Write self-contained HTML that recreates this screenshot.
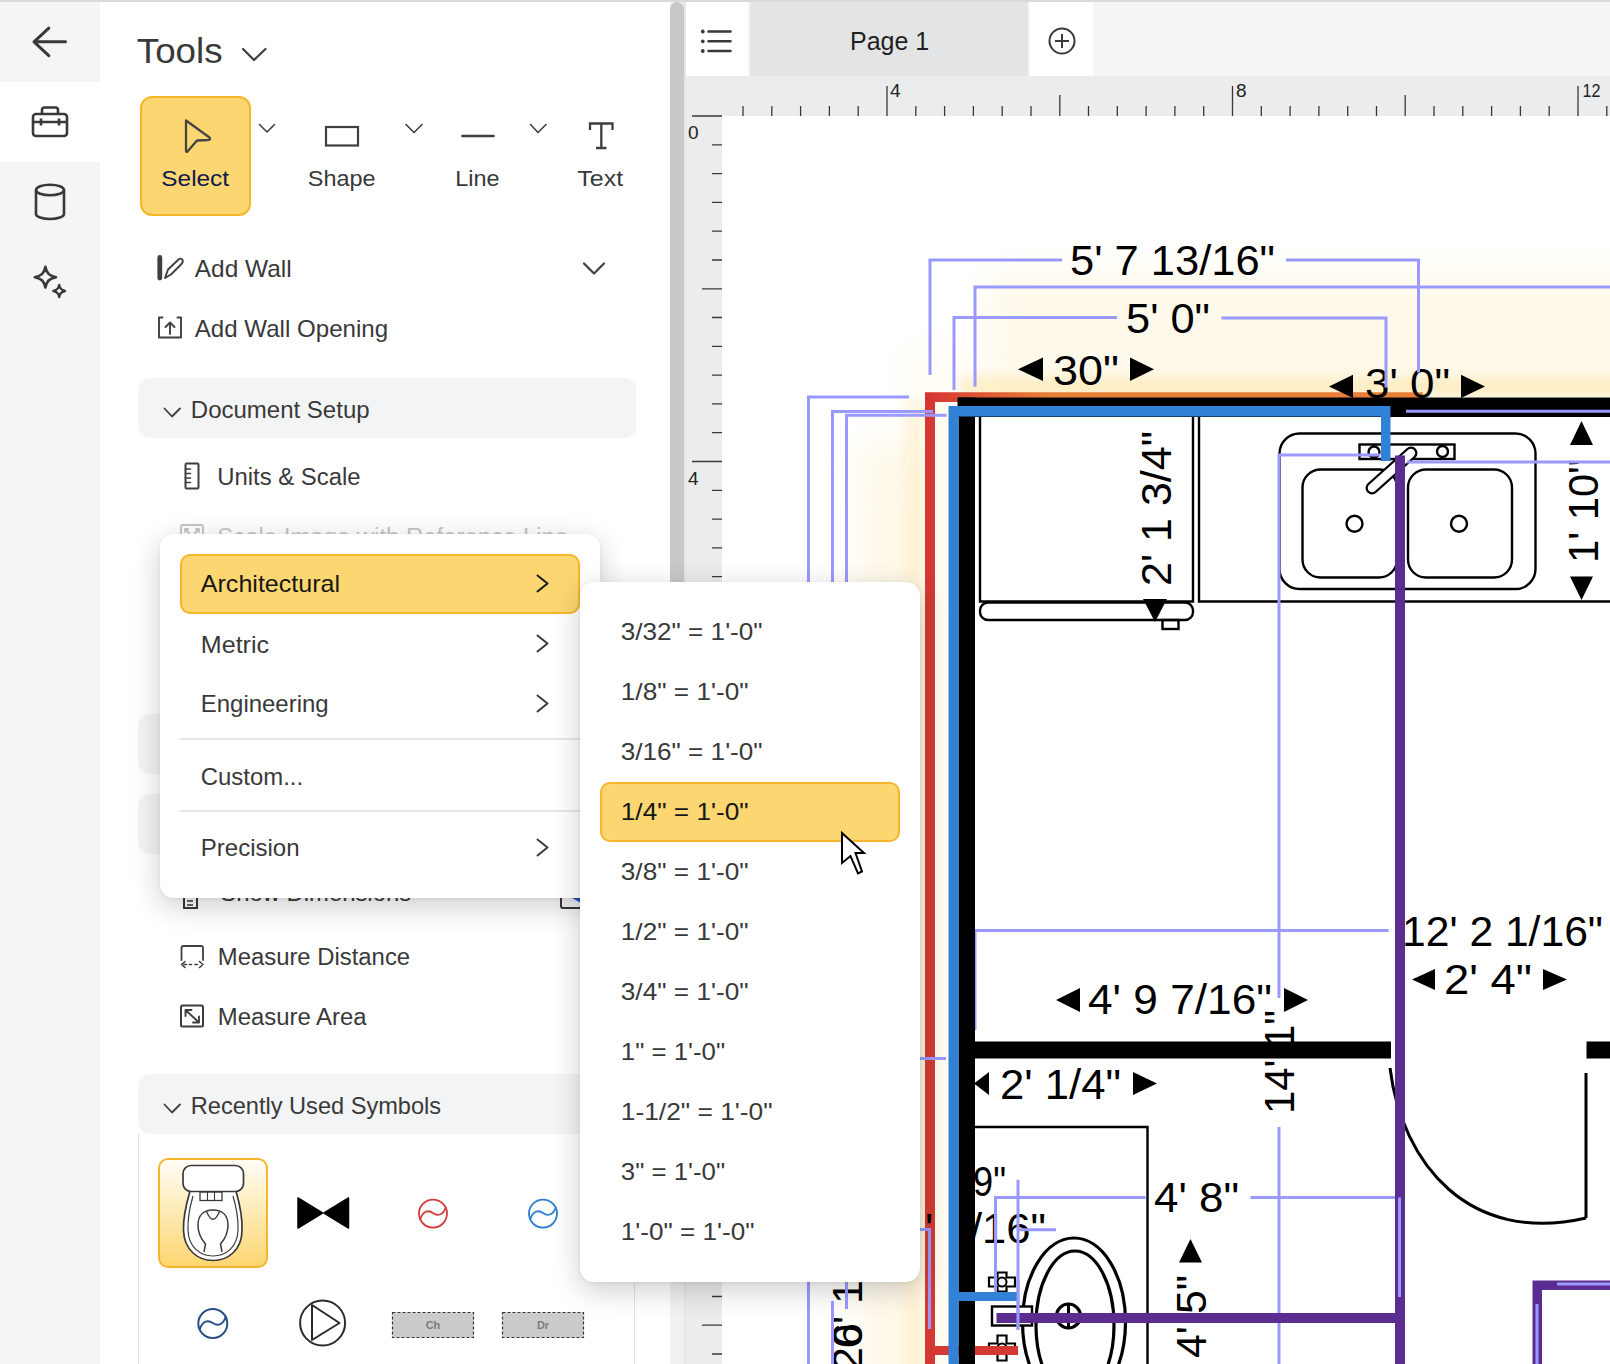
<!DOCTYPE html>
<html><head><meta charset="utf-8">
<style>
html,body{margin:0;padding:0}
body{width:1610px;height:1364px;overflow:hidden;position:relative;background:#fff;font-family:"Liberation Sans",sans-serif;color:#393939}
.a{position:absolute}
.t{position:absolute;white-space:nowrap;line-height:1}
</style></head><body>
<!-- ===== CANVAS ===== -->
<div class="a" style="left:686px;top:2px;width:924px;height:74px;background:#f4f5f7"></div>
<div class="a" style="left:686px;top:2px;width:62px;height:74px;background:#fff"></div>
<div class="a" style="left:750px;top:2px;width:278px;height:74px;background:#e3e4e6"></div>
<div class="a" style="left:1030px;top:2px;width:63px;height:74px;background:#fff"></div>
<div class="t" style="left:850px;top:29px;font-size:25px;color:#1f1f1f">Page 1</div>
<svg class="a" style="left:0;top:0" width="1610" height="1364" viewBox="0 0 1610 1364">
  <!-- list icon -->
  <g stroke="#393939" stroke-width="2.6" stroke-linecap="round" fill="none">
    <path d="M702.8 31.5h0M702.8 41.3h0M702.8 51h0" stroke-width="3.8"/>
    <path d="M708.5 31.5h22M708.5 41.3h22M708.5 51h22"/>
  </g>
  <!-- plus circle -->
  <g stroke="#393939" stroke-width="2" fill="none">
    <circle cx="1062" cy="41" r="12.5"/>
    <path d="M1062 34v14M1055 41h14"/>
  </g>
</svg>
<!-- rulers -->
<div class="a" style="left:686px;top:76px;width:924px;height:40px;background:#ebecee"></div>
<div class="a" style="left:686px;top:116px;width:36px;height:1248px;background:#ebecee"></div>
<svg class="a" style="left:0;top:0" width="1610" height="1364">
  <path stroke="#393939" stroke-width="1.3" fill="none" d="M743.0 106V116 M771.8 106V116 M800.6 106V116 M829.4 106V116 M858.2 106V116 M887.0 86V116 M915.8 106V116 M944.6 106V116 M973.4 106V116 M1002.2 106V116 M1031.0 106V116 M1059.8 95V116 M1088.5 106V116 M1117.3 106V116 M1146.1 106V116 M1174.9 106V116 M1203.7 106V116 M1232.5 86V116 M1261.3 106V116 M1290.1 106V116 M1318.9 106V116 M1347.7 106V116 M1376.5 106V116 M1405.2 95V116 M1434.0 106V116 M1462.8 106V116 M1491.6 106V116 M1520.4 106V116 M1549.2 106V116 M1578.0 86V116 M1606.8 106V116"/>
  <path stroke="#393939" stroke-width="1.3" fill="none" d="M692 116H722 M712 144.8H722 M712 173.6H722 M712 202.4H722 M712 231.2H722 M712 260.0H722 M702 288.8H722 M712 317.5H722 M712 346.3H722 M712 375.1H722 M712 403.9H722 M712 432.7H722 M692 461.5H722 M712 490.3H722 M712 519.1H722 M712 547.9H722 M712 576.7H722 M712 605.5H722 M702 634.2H722 M712 663.0H722 M712 691.8H722 M712 720.6H722 M712 749.4H722 M712 778.2H722 M692 807.0H722 M712 835.8H722 M712 864.6H722 M712 893.4H722 M712 922.2H722 M712 951.0H722 M702 979.8H722 M712 1008.5H722 M712 1037.3H722 M712 1066.1H722 M712 1094.9H722 M712 1123.7H722 M692 1152.5H722 M712 1181.3H722 M712 1210.1H722 M712 1238.9H722 M712 1267.7H722 M712 1296.5H722 M702 1325.2H722 M712 1354.0H722"/>
  <g font-family="Liberation Sans" font-size="19" fill="#222">
    <text x="890" y="97">4</text><text x="1236" y="97">8</text><text x="1582.5" y="97" textLength="18" lengthAdjust="spacingAndGlyphs">12</text>
    <text x="688" y="139">0</text><text x="688" y="484.5">4</text>
  </g>
</svg>
<!-- FLOORPLAN -->
<div id="plan" class="a" style="left:722px;top:116px;width:888px;height:1248px;overflow:hidden">
<svg class="a" style="left:-722px;top:-116px" width="1610" height="1364">
<defs>
 <filter id="glow" x="-20%" y="-20%" width="140%" height="140%"><feGaussianBlur stdDeviation="22"/></filter>
</defs>
<!-- glow -->
<defs>
 <filter id="b18" filterUnits="userSpaceOnUse" x="600" y="100" width="1200" height="1400"><feGaussianBlur stdDeviation="18"/></filter>
 <filter id="b7" filterUnits="userSpaceOnUse" x="600" y="100" width="1200" height="1400"><feGaussianBlur stdDeviation="7"/></filter>
 <clipPath id="outside"><path d="M600 100H1700V397H958V1400H600Z"/></clipPath>
</defs>
<g clip-path="url(#outside)">
 <rect x="985" y="270" width="700" height="127" fill="#fdf0c6" opacity="0.36" filter="url(#b18)"/>
 <rect x="960" y="378" width="700" height="18" fill="#fce3a2" opacity="0.65" filter="url(#b7)"/>
 <rect x="855" y="440" width="70" height="1000" fill="#fdf0c6" opacity="0.38" filter="url(#b18)"/>
 <rect x="905" y="400" width="20" height="1000" fill="#fce3a2" opacity="0.35" filter="url(#b7)"/>
 <rect x="900" y="345" width="60" height="55" fill="#fdf0c6" opacity="0.22" filter="url(#b18)"/>
</g>
<rect x="935" y="402" width="13.5" height="962" fill="#fffbee"/>

<!-- thin black fixtures -->
<g fill="none" stroke="#000" stroke-width="2.4">
 <path d="M980 417V601.5H1193V417"/>
 <rect x="980" y="602.5" width="213" height="17.5" rx="8"/>
 <rect x="1162.5" y="620" width="16" height="9"/>
 <path d="M1199 417V601.5H1610"/>
 <rect x="1279.5" y="433.5" width="256" height="155.5" rx="20"/>
 <rect x="1302.5" y="469.5" width="94.5" height="108" rx="18"/>
 <rect x="1408" y="469.5" width="104" height="108" rx="18"/>
 <circle cx="1354.5" cy="523.7" r="8"/>
 <circle cx="1459" cy="523.7" r="8"/>
 <rect x="1359.5" y="444.5" width="95" height="14.5"/>
 <circle cx="1374" cy="452" r="5.5"/>
 <circle cx="1442.5" cy="451.5" r="5.5"/>
 <path d="M1372 488L1411 453" stroke-width="13" stroke-linecap="round"/><path d="M1372 488L1411 453" stroke="#fff" stroke-width="8.4" stroke-linecap="round"/>
 <path d="M975 1127H1147.5V1364"/>
 <path d="M1586 1073V1218" stroke-width="3"/>
 <path d="M1390 1068C1402 1165 1470 1245 1586 1218" stroke-width="3"/>
 <ellipse cx="1074" cy="1322" rx="51.5" ry="84" stroke-width="3.2"/>
 <ellipse cx="1075" cy="1325" rx="39" ry="74" stroke-width="3.2"/>
 <circle cx="1068.5" cy="1316" r="12" stroke-width="3.2"/>
 <path d="M1068.5 1304V1328" stroke-width="3"/>
 <rect x="992" y="1306.5" width="40" height="19" fill="#fff"/>
 <path d="M989 1277.5h8.5v-5h9v5h8.5v9h-8.5v5h-9v-5h-8.5Z" stroke-width="2.2"/><circle cx="1002" cy="1282" r="4.5" fill="#fff" stroke-width="2"/>
 <path d="M989 1343.5h8.5v-8h9v8h8.5v9h-8.5v8h-9v-8h-8.5Z" stroke-width="2.2"/><circle cx="1002" cy="1348" r="4.5" fill="#fff" stroke-width="2"/>
</g>
<!-- red / orange -->
<defs>
 <linearGradient id="rg" x1="925" y1="0" x2="1050" y2="0" gradientUnits="userSpaceOnUse">
  <stop offset="0" stop-color="#d63333"/><stop offset="1" stop-color="#e8803a"/>
 </linearGradient>
</defs>
<path d="M925 392.3H1423V402H935V1364H925Z" fill="url(#rg)"/>
<rect x="925" y="402" width="10" height="962" fill="#d43a33"/>
<rect x="935" y="1346" width="83" height="9" fill="#d43a33"/>
<!-- dimension texts -->
<g font-family="Liberation Sans" font-size="43" fill="#000">
 <text x="1070" y="274.7" textLength="205" lengthAdjust="spacingAndGlyphs">5' 7 13/16"</text>
 <text x="1126" y="332.5" textLength="84" lengthAdjust="spacingAndGlyphs">5' 0"</text>
 <text x="1053" y="384.6" textLength="66" lengthAdjust="spacingAndGlyphs">30"</text>
 <text x="1365" y="398" textLength="85" lengthAdjust="spacingAndGlyphs">3' 0"</text>
 <text x="1402" y="945.7" textLength="201" lengthAdjust="spacingAndGlyphs">12' 2 1/16"</text>
 <text x="1444" y="993.6" textLength="88" lengthAdjust="spacingAndGlyphs">2' 4"</text>
 <text x="1088" y="1014.3" textLength="184" lengthAdjust="spacingAndGlyphs">4' 9 7/16"</text>
 <text x="1000" y="1098.6" textLength="121" lengthAdjust="spacingAndGlyphs">2' 1/4"</text>
 <text x="1154" y="1212.4" textLength="85" lengthAdjust="spacingAndGlyphs">4' 8"</text>
 <text x="973" y="1195.5" textLength="33" lengthAdjust="spacingAndGlyphs">9"</text>
 <text x="970" y="1243" textLength="76" lengthAdjust="spacingAndGlyphs">/16"</text>
 <text transform="translate(1171 586) rotate(-90)" textLength="155" lengthAdjust="spacingAndGlyphs">2' 1 3/4"</text>
 <text transform="translate(1597.5 563) rotate(-90)" textLength="104" lengthAdjust="spacingAndGlyphs">1' 10"</text>
 <text transform="translate(1294 1114) rotate(-90)" textLength="104" lengthAdjust="spacingAndGlyphs">14' 1"</text>
 <text transform="translate(1206 1358) rotate(-90)" textLength="83" lengthAdjust="spacingAndGlyphs">4' 5"</text>
 <text transform="translate(862 1348) rotate(-90)">0' 1"</text>
 <text transform="translate(862 1371) rotate(-90)">26</text>
</g>
<!-- triangles -->
<g fill="#000">
 <path d="M1018 369.3L1043 357.6V381Z M1154 369.3L1130 357.6V381Z"/>
 <path d="M1329 386.4L1353 374.8V398Z M1485 386.4L1461 374.8V398Z"/>
 <path d="M1155 622L1143 599H1167Z M1155 398L1149 406H1161Z"/>
 <path d="M1581.5 421L1570 445H1593Z M1581.5 600L1570 576.5H1593Z"/>
 <path d="M1412 979.5L1435 969V990Z M1567 979.5L1543 969V990Z"/>
 <path d="M1056 1000L1080 988V1012Z M1308 1000L1284 988V1012Z"/>
 <path d="M974 1083.5L989 1072V1095Z M1157 1083.5L1133 1072V1095Z"/>
 <path d="M1190.5 1239L1179 1262.5H1202Z"/>
</g>

<text x="925" y="1243" font-family="Liberation Sans" font-size="43">'</text>
<!-- light purple leaders -->
<g fill="none" stroke="#9999ff" stroke-width="3">
 <path d="M930 375V260H1062M1286 260H1418.5V372.5"/>
 <path d="M975 386.5V287H1610"/>
 <path d="M954 390V317.5H1117M1221.5 318H1386V387.5"/>
 <path d="M909 397H808.5V1364"/>
 <path d="M933 411.5H832.5V1282M832.5 1301V1364"/>
 <path d="M946.5 415.3H846.5V1309"/>
 <path d="M1380 455H1279V998M1279 1127V1364"/>
 <path d="M975 1030V930.6H1388.6"/>
 <path d="M920 1058.5H946"/>
 <path d="M995.5 1297V1197.5H1145.5M1250.5 1197.5H1400V1297"/>
 <path d="M1018 1179.7V1329.6M1018 1229.7H1056"/>
</g>
<!-- black walls -->
<g fill="#000">
 <rect x="957.5" y="397.5" width="652.5" height="19.5"/>
 <rect x="958.5" y="397.5" width="16.5" height="966.5"/>
 <rect x="974" y="1041.5" width="417" height="17"/>
 <rect x="1586.5" y="1041.5" width="23.5" height="17"/>
</g>
<!-- blue -->
<g fill="#3182d6">
 <path d="M948.5 406H1390.5V461H1381V416.5H958.5V1364H948.5Z"/>
 <rect x="958" y="1292" width="60" height="9"/>
</g>
<!-- purple -->
<g fill="#5c2d91">
 <rect x="1395" y="455.5" width="10" height="908.5"/>
 <rect x="996.5" y="1313" width="408.5" height="10"/>
 <path d="M1532.5 1364V1280.5H1610V1290H1542V1364Z"/>
</g>
<g fill="none" stroke="#9999ff" stroke-width="3">
 <path d="M1406 411.3H1610M1407 462H1610"/>
 <path d="M1399.5 1197.5V1297"/>
 <path d="M1537 1364V1304M1557 1284H1610"/>
 <path d="M1018 1280V1330"/>
 <path d="M920 1229.5H929.5V1329"/>
</g>
</svg>
</div>

<!-- ===== SIDEBAR ===== -->
<div class="a" style="left:0;top:2px;width:100px;height:1362px;background:#f4f5f7"></div>
<div class="a" style="left:0;top:82px;width:100px;height:80px;background:#fff"></div>
<div class="a" style="left:0;top:0;width:1610px;height:2px;background:#d9d9d9"></div>

<!-- ===== PANEL ===== -->
<div class="a" style="left:670px;top:2px;width:14px;height:1362px;background:#f1f1f1"></div>
<div class="a" style="left:670px;top:2px;width:14px;height:1250px;border-radius:7px;background:#c8c8c8"></div>
<div class="a" style="left:684px;top:2px;width:2px;height:1362px;background:#e6e6e6"></div>


<!-- ===== PANEL CONTENT ===== -->
<div class="a" style="left:138px;top:378px;width:498px;height:60px;border-radius:12px;background:#f3f4f6"></div>
<div class="a" style="left:138px;top:714px;width:498px;height:60px;border-radius:12px;background:#f3f4f6"></div>
<div class="a" style="left:138px;top:794px;width:498px;height:60px;border-radius:12px;background:#f3f4f6"></div>
<div class="a" style="left:138px;top:1074px;width:498px;height:60px;border-radius:12px;background:#f3f4f6"></div>
<div class="a" style="left:138px;top:1134px;width:495px;height:240px;border-left:1.5px solid #e2e2e2;border-right:1.5px solid #e2e2e2"></div>
<div class="a" style="left:140px;top:96px;width:107px;height:116px;border-radius:12px;background:#fcd670;border:2px solid #f7b52c"></div>
<div class="a" style="left:158px;top:1158px;width:106px;height:106px;border-radius:10px;background:linear-gradient(#fffdf6,#fcd670);border:2px solid #f7b52c"></div>
<svg class="a" style="left:0;top:0" width="1610" height="1364">
 <g fill="none" stroke="#393939" stroke-width="3" stroke-linecap="round" stroke-linejoin="round">
  <path d="M48.8 28.1L34 41.8L48.8 55.7M34 41.8H65.5"/>
 </g>
 <g fill="none" stroke="#393939" stroke-width="2.6" stroke-linejoin="round">
  <rect x="33" y="114" width="34" height="22" rx="3"/>
  <path d="M42 114v-4a2.5 2.5 0 0 1 2.5 -2.5h11a2.5 2.5 0 0 1 2.5 2.5V114"/>
  <path d="M33 122H67M41 118.5v7M59 118.5v7"/>
  <path d="M36 190v24a14 5 0 0 0 28 0V190"/>
  <ellipse cx="50" cy="190" rx="14" ry="5.2"/>
  <path d="M45.4 266.8C46.8 273.5 49 275.6 56 277.2C49 278.8 46.8 281 45.4 287.6C44 281 41.8 278.8 34.8 277.2C41.8 275.6 44 273.5 45.4 266.8Z" stroke-width="2.6"/>
  <path d="M59.2 285C59.8 288.5 61 289.8 65 291C61 292.2 59.8 293.5 59.2 297C58.6 293.5 57.4 292.2 53.4 291C57.4 289.8 58.6 288.5 59.2 285Z" stroke-width="2.4"/>
 </g>
 <!-- tools row -->
 <g fill="none" stroke="#3f3f3f" stroke-linecap="round" stroke-linejoin="round">
  <path d="M243 49L254 60L265.5 49" stroke-width="2.2"/>
  <path d="M186 120.5L209.5 137.5Q211 139.5 208.5 140L197 140.5L187.5 151.5Q186 152.5 186 150.5Z" stroke-width="2.3" stroke="#444"/>
  <path d="M259.5 124.5L267 132L274.5 124.5" stroke-width="1.6"/>
  <rect x="326" y="127" width="32" height="18.5" stroke-width="2.2" stroke-linejoin="miter"/>
  <path d="M406 124.5L414 132.5L422 124.5" stroke-width="1.6"/>
  <path d="M462.5 136H493.5" stroke-width="2.6"/>
  <path d="M530.5 124.5L538 132.5L546 124.5" stroke-width="1.6"/>
  <path d="M590 130V123.5H612.5V130M601.3 123.5V148M596 148H606.5" stroke-width="2.3" stroke-linecap="butt" stroke-linejoin="miter"/>
  <!-- add wall -->
  <path d="M159.8 257.5V278" stroke-width="4.8"/>
  <path d="M165 278L168 269.5L178.5 259.5Q181 257.5 182.5 260Q183.5 262 181.5 264L171 274.5Z" stroke-width="1.9"/>
  <path d="M584 263.5L594 273.5L604 263.5" stroke-width="2.2"/>
  <!-- add wall opening -->
  <path d="M162.5 317.5H159V337.5H181V317.5H177.5M170 334V322.5M165.5 327L170 322.5L174.5 327" stroke-width="1.9"/>
  <!-- doc setup chevron -->
  <path d="M164.5 408.5L172 416.5L180 408.5" stroke-width="1.8"/>
  <!-- units icon -->
  <rect x="185.5" y="463.5" width="13" height="25" rx="1" stroke-width="2"/>
  <path d="M185.5 469h5M185.5 473.5h5M185.5 478h5M185.5 482.5h5" stroke-width="1.6"/>
  <!-- measure distance -->
  <path d="M181.5 960V948Q181.5 946 183.5 946H201Q203 946 203 948V960" stroke-width="1.8"/>
  <path d="M184 964.5h2.5M189.5 964.5h2M195 964.5h2.5M185 961.5L181.5 964.5L185 967.5M199.5 961.5L203 964.5L199.5 967.5" stroke-width="1.6"/>
  <!-- measure area -->
  <rect x="181" y="1005.5" width="22" height="21" rx="1.5" stroke-width="2"/>
  <path d="M185.5 1010l13.5 12.5M185.5 1010v6M185.5 1010h6M199 1022.5v-6M199 1022.5h-6" stroke-width="1.9"/>
  <!-- symbols chevron -->
  <path d="M164.5 1104.5L172 1112.5L180 1104.5" stroke-width="1.8"/>
  <!-- scale image icon (disabled) -->
  <path d="M181 540V527Q181 525 183 525H201Q203 525 203 527V540" stroke="#c4c4c4" stroke-width="1.9"/>
  <path d="M189.5 533.5L185 529M185 532.5V529H188.5M194.5 533.5L199 529M199 532.5V529H195.5" stroke="#c4c4c4" stroke-width="1.8" stroke-linecap="butt"/>
 </g>
 <g font-family="Liberation Sans" fill="#393939">
  <text x="136.8" y="63" font-size="35.5" textLength="85.8" lengthAdjust="spacingAndGlyphs">Tools</text>
  <text x="161.3" y="185.6" font-size="22.5" fill="#0e1a4a" textLength="67.8" lengthAdjust="spacingAndGlyphs">Select</text>
  <text x="307.8" y="185.5" font-size="22.5" textLength="67.8" lengthAdjust="spacingAndGlyphs">Shape</text>
  <text x="455.3" y="185.5" font-size="22.5" textLength="44.3" lengthAdjust="spacingAndGlyphs">Line</text>
  <text x="577.3" y="185.5" font-size="22.5" textLength="45.8" lengthAdjust="spacingAndGlyphs">Text</text>
  <text x="194.8" y="277.2" font-size="24" textLength="96.8" lengthAdjust="spacingAndGlyphs">Add Wall</text>
  <text x="194.8" y="337" font-size="24" textLength="193.3" lengthAdjust="spacingAndGlyphs">Add Wall Opening</text>
  <text x="190.8" y="418.4" font-size="24" textLength="178.8" lengthAdjust="spacingAndGlyphs">Document Setup</text>
  <text x="217.3" y="484.8" font-size="23.5" textLength="143.3" lengthAdjust="spacingAndGlyphs">Units &amp; Scale</text>
  <text x="217.3" y="544.5" font-size="23.5" fill="#c6c6c6" textLength="350.8" lengthAdjust="spacingAndGlyphs">Scale Image with Reference Line</text>
  <text x="220.3" y="901.2" font-size="23.5" textLength="190.8" lengthAdjust="spacingAndGlyphs">Show Dimensions</text>
  <text x="217.8" y="965" font-size="23.5" textLength="192.3" lengthAdjust="spacingAndGlyphs">Measure Distance</text>
  <text x="217.8" y="1024.8" font-size="23.5" textLength="148.8" lengthAdjust="spacingAndGlyphs">Measure Area</text>
  <text x="190.8" y="1114" font-size="24" textLength="250.3" lengthAdjust="spacingAndGlyphs">Recently Used Symbols</text>
 </g>
</svg>


<!-- ===== SYMBOLS ===== -->
<svg class="a" style="left:0;top:0" width="1610" height="1364">
 <g fill="#fff" stroke="#3a3a3a" stroke-width="1.7">
  <path d="M190 1191C186 1205 183 1218 183.5 1230C184 1250 198 1260.5 213 1260.5C228 1260.5 242 1250 242 1230C242.5 1218 240 1205 236 1191Z"/>
  <path d="M193 1196C189.5 1208 187.5 1219 188 1230C188.5 1247 200 1256 213 1256C226 1256 237.5 1247 238 1230C238.5 1219 236.5 1208 233 1196" fill="none" stroke-width="1.2"/>
  <path d="M204 1252L205.5 1244C201 1239 198 1232 198 1225C198 1215 204 1210 213 1210C222 1210 228 1215 228 1225C228 1232 225 1239 220.5 1244L222 1252" fill="none" stroke-width="1.5"/>
  <path d="M206.5 1211.5Q213 1227 219.5 1211.5" fill="none" stroke-width="1.3"/>
  <rect x="200" y="1192" width="22" height="8.5" fill="none" stroke-width="1.3"/>
  <path d="M207.5 1192v8.5M214.5 1192v8.5" stroke-width="1.1"/>
  <rect x="183" y="1165.5" width="60.5" height="26" rx="8"/>
 </g>

 <path d="M298 1198L322.5 1213L298 1228ZM348.5 1198L324 1213L348.5 1228Z" fill="#000" stroke="#000" stroke-width="1.5" stroke-linejoin="round"/>
 <g fill="none" stroke-width="1.8">
  <circle cx="433" cy="1213.6" r="14" stroke="#d43c3c"/>
  <path d="M420 1220C423 1210 429 1210 433 1213C437 1216 443 1216 446 1207" stroke="#d43c3c"/>
  <circle cx="543" cy="1213.6" r="14" stroke="#2f7fd0"/>
  <path d="M530 1220C533 1210 539 1210 543 1213C547 1216 553 1216 556 1207" stroke="#2f7fd0"/>
  <circle cx="212.8" cy="1323.5" r="14.5" stroke="#2a4f86" stroke-width="2"/>
  <path d="M199.5 1330C202.5 1320 208.5 1320 212.8 1323C217 1326 223 1326 226 1316" stroke="#2a4f86" stroke-width="2"/>
  <circle cx="322.6" cy="1323" r="22.5" stroke="#2b2b2b" stroke-width="2"/>
  <path d="M312 1305V1340L339.5 1323Z" stroke="#2b2b2b" stroke-width="2" stroke-linejoin="round"/>
 </g>
 <g stroke="#333" stroke-width="1.2" stroke-dasharray="3 2" fill="#cbcbcb">
  <rect x="392.5" y="1312.5" width="81" height="25"/>
  <rect x="502.5" y="1312.5" width="81" height="25"/>
 </g>
 <g font-family="Liberation Sans" font-size="11" font-weight="bold" fill="#7d7d7d" text-anchor="middle">
  <text x="433" y="1329">Ch</text><text x="543" y="1329">Dr</text>
 </g>
 <!-- show dimensions checkbox remnant -->
 <rect x="561" y="890" width="20" height="18" rx="2" fill="#fff" stroke="#393939" stroke-width="2"/>
 <path d="M572 898L581 889V903Z" fill="#1f5fd0"/>
 <path d="M184 898V908H197V898" fill="none" stroke="#393939" stroke-width="2"/>
 <path d="M187 901h6M187 905h6" stroke="#393939" stroke-width="1.5"/>
</svg>

<!-- ===== MENU 1 ===== -->
<div class="a" style="left:160px;top:534px;width:440px;height:364px;border-radius:14px;background:#fff;box-shadow:0 8px 30px rgba(0,0,0,0.2),0 1px 4px rgba(0,0,0,0.06)"></div>
<div class="a" style="left:180px;top:554px;width:396px;height:56px;border-radius:10px;background:#fcd670;border:2px solid #f7b52c"></div>
<div class="a" style="left:180px;top:738px;width:400px;height:2px;background:#e6e6e6"></div>
<div class="a" style="left:180px;top:810px;width:400px;height:2px;background:#e6e6e6"></div>
<svg class="a" style="left:0;top:0" width="1610" height="1364">
 <g font-family="Liberation Sans" font-size="24" fill="#393939">
  <text x="200.8" y="592.3" fill="#161616" textLength="139.3" lengthAdjust="spacingAndGlyphs">Architectural</text>
  <text x="200.8" y="652.5" textLength="68.3" lengthAdjust="spacingAndGlyphs">Metric</text>
  <text x="200.8" y="712" textLength="127.8" lengthAdjust="spacingAndGlyphs">Engineering</text>
  <text x="200.8" y="784.8" textLength="102.3" lengthAdjust="spacingAndGlyphs">Custom...</text>
  <text x="200.8" y="856.1" textLength="98.8" lengthAdjust="spacingAndGlyphs">Precision</text>
 </g>
 <g fill="none" stroke="#393939" stroke-width="2" stroke-linecap="round" stroke-linejoin="round">
  <path d="M537.5 575.5L547.5 583.5L537.5 591.5" stroke="#161616"/>
  <path d="M537.5 635.5L547.5 643.5L537.5 651.5"/>
  <path d="M537.5 695.5L547.5 703.5L537.5 711.5"/>
  <path d="M537.5 839.5L547.5 847.5L537.5 855.5"/>
 </g>
</svg>

<!-- ===== SUBMENU ===== -->
<div class="a" style="left:580px;top:582px;width:340px;height:700px;border-radius:14px;background:#fff;box-shadow:0 8px 30px rgba(0,0,0,0.2),0 1px 4px rgba(0,0,0,0.06)"></div>
<div class="a" style="left:600px;top:782px;width:296px;height:56px;border-radius:10px;background:#fcd670;border:2px solid #f7b52c"></div>
<svg class="a" style="left:0;top:0" width="1610" height="1364">
 <g font-family="Liberation Sans" font-size="24" fill="#393939">
  <text x="620.8" y="640" textLength="141.8" lengthAdjust="spacingAndGlyphs">3/32" = 1'-0"</text>
  <text x="620.8" y="700" textLength="127.8" lengthAdjust="spacingAndGlyphs">1/8" = 1'-0"</text>
  <text x="620.8" y="760" textLength="141.8" lengthAdjust="spacingAndGlyphs">3/16" = 1'-0"</text>
  <text x="620.8" y="820" fill="#161616" textLength="127.8" lengthAdjust="spacingAndGlyphs">1/4" = 1'-0"</text>
  <text x="620.8" y="880" textLength="127.8" lengthAdjust="spacingAndGlyphs">3/8" = 1'-0"</text>
  <text x="620.8" y="940" textLength="127.8" lengthAdjust="spacingAndGlyphs">1/2" = 1'-0"</text>
  <text x="620.8" y="1000" textLength="127.8" lengthAdjust="spacingAndGlyphs">3/4" = 1'-0"</text>
  <text x="620.8" y="1060" textLength="104.3" lengthAdjust="spacingAndGlyphs">1" = 1'-0"</text>
  <text x="620.8" y="1120" textLength="151.8" lengthAdjust="spacingAndGlyphs">1-1/2" = 1'-0"</text>
  <text x="620.8" y="1180" textLength="104.3" lengthAdjust="spacingAndGlyphs">3" = 1'-0"</text>
  <text x="620.8" y="1240" textLength="133.8" lengthAdjust="spacingAndGlyphs">1'-0" = 1'-0"</text>
 </g>
</svg>
<!-- cursor -->
<svg class="a" style="left:0;top:0" width="1610" height="1364">
 <path d="M842 833L864 853H855.5L862 871.5L858 873.5L850.5 856L842 863Z" fill="#fff" stroke="#000" stroke-width="2" stroke-linejoin="miter"/>
</svg>

</body></html>
